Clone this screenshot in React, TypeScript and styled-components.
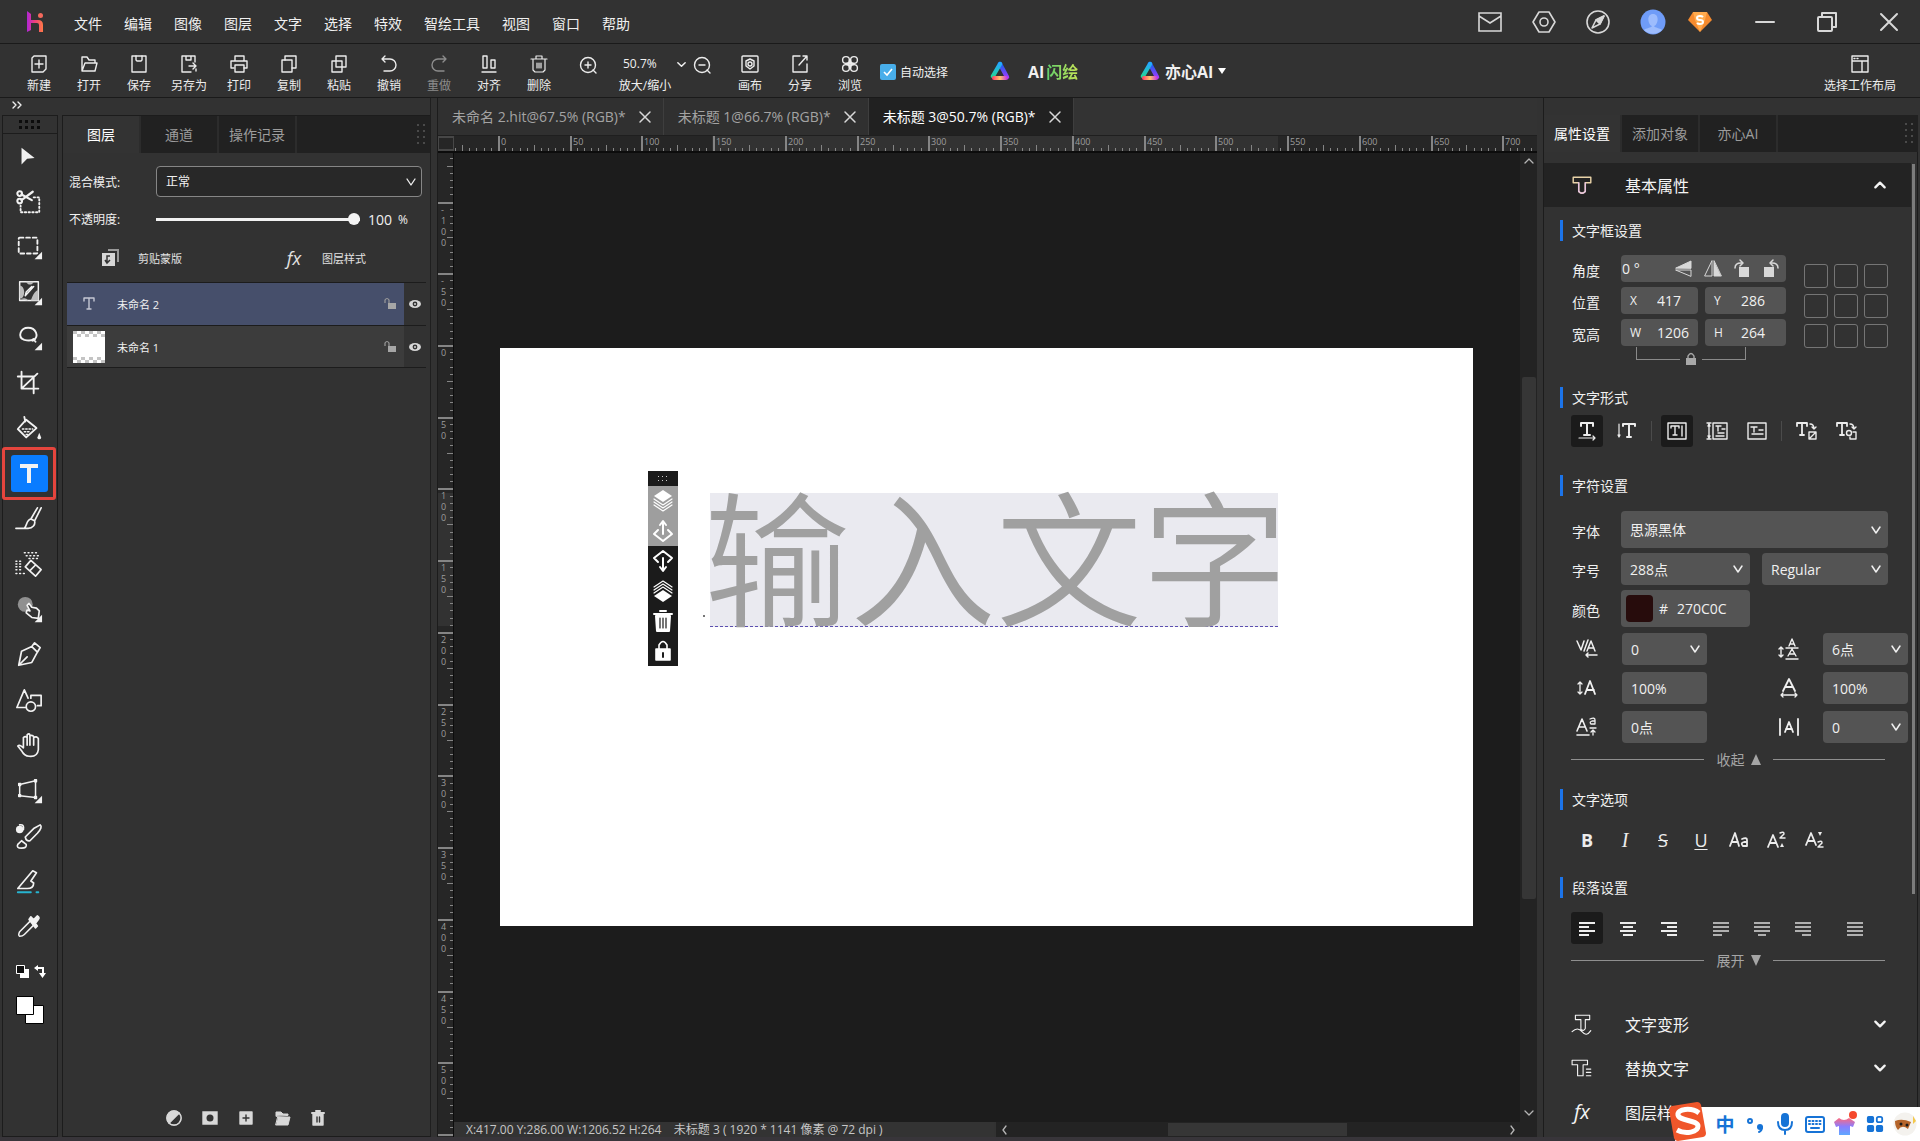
import React from "react";
import styled, { createGlobalStyle, css } from "styled-components";

const FONT = `"Open Sans", "Noto Sans CJK SC", sans-serif`;

const Global = createGlobalStyle`
  *, *::before, *::after { box-sizing: border-box; }
  body { margin: 0; background: #38353a; font-family: ${FONT}; font-size: 14px; color: #f0f0f0; overflow: hidden; }
  button, input, select { font: inherit; color: inherit; }
  button { margin: 0; padding: 0; border: 0; background: none; cursor: pointer; }
  svg { display: block; flex: none; }
`;

/* ---------- shell ---------- */

const Shell = styled.div`
  display: flex;
  flex-direction: column;
  height: 100vh;
  background: #323232;
`;

const TitleBar = styled.header`
  display: flex;
  align-items: center;
  flex: none;
  height: 44px;
  padding: 0 20px 0 24px;
  border-bottom: 1px solid #1a1a1a;
`;

const Logo = styled.div`
  width: 22px;
  margin-right: 28px;
`;

const Menu = styled.nav`
  display: flex;
  gap: 22px;
  flex: 1;
  padding-top: 4px;
`;

const MenuItem = styled.button`
  line-height: 20px;
  white-space: nowrap;
`;

const WindowActions = styled.div<{ $gap: number; $lead: number }>`
  display: flex;
  align-items: center;
  gap: ${(p) => p.$gap}px;
  margin-left: ${(p) => p.$lead}px;
`;

const IconButton = styled.button`
  display: flex;
  align-items: center;
  justify-content: center;
  color: #d8d8d8;
`;

const Toolbar = styled.div`
  display: flex;
  flex: none;
  height: 54px;
  padding: 0 18px 0 14px;
  border-bottom: 1px solid #1a1a1a;
  white-space: nowrap;
`;

const ToolbarButton = styled.button<{ $dim?: boolean; $wide?: boolean }>`
  display: flex;
  flex-direction: column;
  align-items: center;
  gap: 3px;
  width: ${(p) => (p.$wide ? 84 : 50)}px;
  padding-top: 10px;
  font-size: 12px;
  line-height: 18px;
  color: ${(p) => (p.$dim ? "#8c8c8c" : "#ececec")};
`;

const ZoomGroup = styled.div`
  display: flex;
  width: 161px;
  padding-left: 14px;
  gap: 5px;
`;

const ZoomIcon = styled(IconButton)`
  width: 20px;
  height: 20px;
  margin-top: 11px;
  color: #ececec;
`;

const ZoomValue = styled.label`
  display: flex;
  flex-direction: column;
  align-items: center;
  gap: 3px;
  width: 84px;
  padding-top: 10px;
  font-size: 12px;
  line-height: 18px;
`;

const ZoomSelect = styled.span`
  display: flex;
  align-items: center;
  align-self: stretch;
  height: 20px;
  padding-left: 20px;
`;

const PlainSelect = styled.select`
  flex: 1;
  min-width: 0;
  padding: 0;
  border: 0;
  background: transparent;
  appearance: none;
  outline: none;
`;

const AutoSelect = styled.label`
  display: flex;
  align-items: center;
  gap: 4px;
  width: 115px;
  padding: 2px 0 0 5px;
  font-size: 12px;
`;

const Tick = styled.span`
  position: relative;
  width: 16px;
  height: 16px;
`;

const TickInput = styled.input`
  width: 16px;
  height: 16px;
  margin: 0;
  display: block;
  appearance: none;
  border-radius: 2px;
  background: #48aeea;
`;

const TickMark = styled.svg`
  position: absolute;
  inset: 0;
  pointer-events: none;
`;

const BrandButton = styled.button<{ $width: number; $gap: number }>`
  display: flex;
  align-items: center;
  gap: ${(p) => p.$gap}px;
  width: ${(p) => p.$width}px;
  font-size: 16px;
  font-weight: 700;
`;

const GreenText = styled.span`
  background: linear-gradient(90deg, #5fcf6b, #c4e457);
  background-clip: text;
  color: transparent;
  margin-left: 2px;
`;

const Spacer = styled.div<{ $grow?: number }>`
  flex: ${(p) => p.$grow ?? 1};
`;

const Body = styled.div`
  display: grid;
  grid-template-columns: 431px minmax(0, 1fr) 377px;
  gap: 6px;
  flex: 1;
  min-height: 0;
  border-bottom: 4px solid #38353a;
`;

/* ---------- left side ---------- */

const LeftSide = styled.div`
  display: flex;
  flex-direction: column;
  min-height: 0;
  padding-left: 2px;
  border-right: 1px solid #1f1f1f;
`;

const CollapseStrip = styled.div`
  display: flex;
  align-items: center;
  flex: none;
  height: 17px;
  padding-left: 10px;
  padding-bottom: 4px;
`;

const LeftColumns = styled.div`
  display: flex;
  gap: 4px;
  flex: 1;
  min-height: 0;
`;

const ToolColumn = styled.div`
  display: flex;
  flex-direction: column;
  width: 56px;
  border: 1px solid #1c1c1c;
`;

const Grip = styled.div`
  display: flex;
  justify-content: center;
  align-items: center;
  flex: none;
  height: 18px;
  border-bottom: 1px solid #1c1c1c;
`;

const ToolList = styled.div`
  display: flex;
  flex-direction: column;
`;

const ToolButton = styled.button<{ $active?: boolean }>`
  display: flex;
  align-items: center;
  justify-content: center;
  width: 54px;
  height: 45px;
  padding-right: 2px;
  color: #f2f2f2;
  &:nth-child(3n) { margin-bottom: 1px; }
  ${(p) =>
    p.$active &&
    css`
      height: 53px;
      margin: -4px 0 -4px -1px;
      padding: 0;
      border: 3px solid #e5453d;
      border-radius: 3px;
    `}
`;

const ActiveTool = styled.span`
  display: flex;
  align-items: center;
  justify-content: center;
  width: 37px;
  height: 37px;
  border-radius: 3px;
  background: #0a7cff;
`;

const SwatchArea = styled.div`
  display: flex;
  flex-direction: column;
  gap: 17px;
  padding: 15px 0 0 13px;
`;

const Panel = styled.section`
  display: flex;
  flex-direction: column;
  flex: 1;
  min-width: 0;
  min-height: 0;
  border: 1px solid #1c1c1c;
  border-right: 0;
`;

const TabStrip = styled.div`
  display: flex;
  flex: none;
  height: 37px;
  background: #212121;
  align-items: stretch;
`;

const PanelTab = styled.button<{ $active?: boolean }>`
  width: 78px;
  padding-bottom: 2px;
  white-space: nowrap;
  border-right: 2px solid #2c2c2c;
  background: ${(p) => (p.$active ? "#333333" : "#212121")};
  color: ${(p) => (p.$active ? "#ffffff" : "#9c9c9c")};
`;

const TabGrip = styled.span`
  display: flex;
  align-items: center;
  padding-right: 2px;
`;

const FormRow = styled.div<{ $top: number; $height: number }>`
  display: flex;
  align-items: center;
  height: ${(p) => p.$height}px;
  margin: ${(p) => p.$top}px 8px 0 6px;
  font-size: 12px;
`;

const FormLabel = styled.label`
  width: 87px;
`;

const BlendSelect = styled.span`
  display: flex;
  align-items: center;
  flex: 1;
  height: 31px;
  padding: 0 4px 0 9px;
  border: 1px solid #868686;
  border-radius: 4px;
  background: #282828;
`;

const Slider = styled.input`
  width: 204px;
  height: 13px;
  margin: 0 8px 0 0;
  appearance: none;
  background: linear-gradient(#f2f2f2, #f2f2f2) center / 100% 3px no-repeat;
  &::-webkit-slider-thumb {
    appearance: none;
    width: 12px;
    height: 12px;
    border-radius: 50%;
    background: #f4f4f4;
  }
`;

const OpacityInput = styled.input`
  width: 30px;
  padding: 0;
  border: 0;
  background: transparent;
  font-size: 14px;
`;

const LayerActions = styled.div`
  display: grid;
  grid-template-columns: 184px 1fr;
  height: 34px;
  margin-top: 12px;
  padding-left: 36px;
`;

const LayerAction = styled.button`
  display: flex;
  align-items: center;
  gap: 17px;
  font-size: 11px;
  color: #e2e2e2;
`;

const Fx = styled.span<{ $size: number }>`
  width: 22px;
  font-size: ${(p) => p.$size}px;
  font-style: italic;
  line-height: 20px;
  text-align: center;
`;

const LayerList = styled.ul`
  flex: 1;
  margin: 7px 0 0;
  padding: 0 4px 0 4px;
  list-style: none;
`;

const LayerRow = styled.li`
  display: grid;
  grid-template-columns: minmax(0, 1fr) 22px;
  height: 43px;
  border-top: 1px solid #1c1c1c;
  &:last-child { border-bottom: 1px solid #1c1c1c; }
`;

const LayerBody = styled.div<{ $selected?: boolean }>`
  display: grid;
  grid-template-columns: 45px 1fr 16px;
  align-items: center;
  padding: 0 5px 0 5px;
  font-size: 11px;
  background: ${(p) => (p.$selected ? "#464f6b" : "#3c3c3c")};
`;

const Thumb = styled.span`
  display: flex;
  justify-content: center;
  width: 34px;
`;

const PanelFooter = styled.div`
  display: flex;
  gap: 16px;
  height: 36px;
  align-items: center;
  padding-left: 101px;
`;

/* ---------- work area ---------- */

const Work = styled.main`
  display: flex;
  flex-direction: column;
  min-width: 0;
  min-height: 0;
  border-left: 1px solid #1c1c1c;
`;

const DocTabs = styled.div`
  display: flex;
  flex: none;
  height: 38px;
  background: #333333;
  border-bottom: 1px solid #1f1f1f;
`;

const DocTab = styled.div<{ $active?: boolean }>`
  display: flex;
  align-items: center;
  gap: 12px;
  padding: 0 11px 0 14px;
  border-right: 1px solid #3e3e3e;
  background: ${(p) => (p.$active ? "#212121" : "#303030")};
  color: ${(p) => (p.$active ? "#ffffff" : "#a3a3a3")};
`;

const DocName = styled.button`
  white-space: nowrap;
  line-height: 20px;
`;

const RulerRow = styled.div`
  display: flex;
  flex: none;
  height: 17px;
  background: #262626;
  border-bottom: 2px solid #0c0c0c;
`;

const RulerCorner = styled.div`
  flex: none;
  width: 16px;
  border: 2px solid #474747;
  border-width: 2px 1px;
`;

const RulerTrack = styled.div`
  flex: 1;
  min-width: 0;
  overflow: hidden;
`;

const CanvasRow = styled.div`
  display: flex;
  flex: 1;
  min-height: 0;
`;

const SideRuler = styled.div`
  flex: none;
  width: 16px;
  overflow: hidden;
  background: #262626;
  border-right: 1px solid #0c0c0c;
`;

const CanvasColumn = styled.div`
  display: flex;
  flex-direction: column;
  flex: 1;
  min-width: 0;
`;

const Viewport = styled.div`
  display: flex;
  align-items: center;
  justify-content: center;
  flex: 1;
  min-height: 0;
  padding: 0 1px 1px 0;
  overflow: hidden;
  background: #1c1c1c;
`;

const Artboard = styled.div`
  position: relative;
  flex: none;
  width: 973px;
  height: 578px;
  background: #ffffff;
`;

const TextObject = styled.div`
  position: absolute;
  left: 210px;
  top: 145px;
  width: 568px;
  height: 134px;
  background: #eaeaf0;
  border-bottom: 1px dashed #5c4fb0;
`;

const CanvasText = styled.div`
  margin: -14px 0 0 -6px;
  font-family: "Noto Sans CJK SC", sans-serif;
  font-size: 146px;
  line-height: 146px;
  font-weight: 350;
  white-space: nowrap;
  color: #a0a0a0;
`;

const Anchor = styled.span`
  position: absolute;
  left: 203px;
  top: 267px;
  width: 2px;
  height: 2px;
  background: #777777;
`;

const FloatBar = styled.div`
  position: absolute;
  left: 148px;
  top: 123px;
  display: flex;
  flex-direction: column;
  width: 30px;
  background: #1b1b1b;
`;

const FloatGrip = styled.div`
  display: flex;
  align-items: center;
  justify-content: center;
  height: 15px;
`;

const FloatButton = styled.button<{ $muted?: boolean }>`
  display: flex;
  align-items: center;
  justify-content: center;
  height: 30px;
  color: #ffffff;
  background: ${(p) => (p.$muted ? "#9e9e9e" : "transparent")};
`;

const VScroll = styled.div`
  display: flex;
  flex-direction: column;
  align-items: center;
  width: 17px;
  padding: 2px 0 4px;
  background: #232323;
  color: #b5b5b5;
`;

const VThumb = styled.div`
  flex: 523;
  width: 14px;
  border-radius: 2px;
  background: #363636;
`;

const StatusRow = styled.div`
  display: flex;
  flex: none;
  height: 15px;
`;

const Status = styled.div`
  width: 540px;
  padding-left: 12px;
  font-size: 12px;
  line-height: 15px;
  white-space: pre;
  color: #c6c6c6;
  background: #333333;
`;

const HScroll = styled.div`
  display: flex;
  align-items: center;
  flex: 1;
  margin-left: 2px;
  padding: 0 2px;
  background: #232323;
  color: #b5b5b5;
`;

const HThumb = styled.div`
  flex: 179;
  height: 13px;
  background: #363636;
`;

/* ---------- properties ---------- */

const RightSide = styled.aside`
  display: flex;
  flex-direction: column;
  min-height: 0;
  overflow: hidden;
  padding: 17px 2px 0 0;
  border-left: 1px solid #1c1c1c;
`;

const Props = styled.div`
  position: relative;
  flex: 1;
  min-height: 0;
  padding-top: 11px;
  overflow: hidden;
  border-right: 1px solid #1c1c1c;
`;

const PropsThumb = styled.div`
  position: absolute;
  right: 2px;
  top: 12px;
  width: 3px;
  height: 730px;
  background: #7c7c7c;
`;

const Accordion = styled.button<{ $open?: boolean }>`
  display: grid;
  grid-template-columns: 24px 1fr 14px;
  column-gap: 30px;
  align-items: center;
  width: calc(100% - 6px);
  height: 44px;
  padding: 0 24px 0 27px;
  font-size: 16px;
  text-align: left;
  color: #f4f4f4;
  background: ${(p) => (p.$open ? "#232323" : "transparent")};
`;

const Heading = styled.h3<{ $top: number }>`
  height: 21px;
  margin: ${(p) => p.$top}px 0 0 16px;
  padding-left: 9px;
  border-left: 3px solid #1c74ea;
  font-size: 14px;
  font-weight: 400;
  line-height: 22px;
`;

const Transform = styled.div`
  display: flex;
  gap: 18px;
  margin: 14px 0 0 28px;
`;

const Rows = styled.div<{ $gap: number }>`
  display: flex;
  flex-direction: column;
  gap: ${(p) => p.$gap}px;
`;

const Row = styled.div<{ $gap: number }>`
  display: flex;
  gap: ${(p) => p.$gap}px;
`;

const RowLabel = styled.span`
  display: flex;
  align-items: center;
  width: 49px;
  padding-top: 2px;
`;

const Box = styled.label<{ $w: number; $h: number }>`
  display: flex;
  align-items: center;
  width: ${(p) => p.$w}px;
  height: ${(p) => p.$h}px;
  padding: 0 6px 0 9px;
  border-radius: 4px;
  background: #545454;
`;

const AngleBox = styled.div`
  display: flex;
  align-items: center;
  gap: 9px;
  width: 165px;
  height: 27px;
  padding: 0 5px 0 1px;
  border-radius: 4px;
  background: #545454;
`;

const Letter = styled.span`
  width: 27px;
  font-size: 12px;
`;

const PlainInput = styled.input`
  flex: 1;
  min-width: 0;
  width: 0;
  padding: 0;
  border: 0;
  outline: none;
  background: transparent;
`;

const Anchors = styled.div`
  display: grid;
  grid-template-columns: repeat(3, 24px);
  grid-auto-rows: 24px;
  gap: 6px;
  margin-top: 9px;
`;

const AnchorCell = styled.button`
  border: 1px solid #757575;
  border-radius: 3px;
`;

const LinkSize = styled.div`
  display: flex;
  align-items: flex-end;
  width: 110px;
  height: 20px;
  margin: -2px 0 0 92px;
  color: #a8a8a8;
`;

const LinkArm = styled.span<{ $side: "left" | "right" }>`
  flex: 1;
  height: 13px;
  margin-bottom: 6px;
  border-bottom: 1px solid #8a8a8a;
  border-${(p) => p.$side}: 1px solid #8a8a8a;
`;

const IconRow = styled.div<{ $top: number; $gap: number }>`
  display: flex;
  align-items: center;
  gap: ${(p) => p.$gap}px;
  margin: ${(p) => p.$top}px 0 0 27px;
`;

const SquareButton = styled.button<{ $active?: boolean; $dim?: boolean }>`
  display: flex;
  align-items: center;
  justify-content: center;
  width: 32px;
  height: 32px;
  border-radius: 3px;
  background: ${(p) => (p.$active ? "#1b1b1b" : "transparent")};
  color: ${(p) => (p.$dim ? "#b0b0b0" : "#ececec")};
`;

const Rule = styled.span<{ $clear?: boolean }>`
  width: 2px;
  height: 20px;
  border-left: 1px solid ${(p) => (p.$clear ? "transparent" : "#4b4b4b")};
`;

const CharRows = styled.div`
  display: flex;
  flex-direction: column;
  gap: 5px;
  margin: 15px 0 6px 28px;
`;

const Swatch = styled.span`
  width: 27px;
  height: 27px;
  margin-right: 6px;
  border-radius: 4px;
  background: #270c0c;
`;

const Hash = styled.span`
  width: 18px;
`;

const ColorBox = styled(Box)`
  padding-left: 5px;
`;

const MetricGrid = styled.div`
  display: grid;
  grid-template-columns: 51px 151px 50px 85px;
  row-gap: 7px;
  margin: 0 0 0 27px;
`;

const MetricIcon = styled.span`
  display: flex;
  align-items: center;
  width: 32px;
  justify-content: center;
`;

const Fold = styled.button<{ $top: number }>`
  display: flex;
  align-items: center;
  gap: 12px;
  width: 314px;
  height: 20px;
  margin: ${(p) => p.$top}px 0 0 27px;
  color: #a5a5a5;
`;

const FoldLine = styled.span<{ $grow: number }>`
  flex: ${(p) => p.$grow};
  height: 1px;
  background: #8f8f8f;
`;

const FoldArrow = styled.svg`
  margin-left: -5px;
`;

const AccordionList = styled.div`
  margin-top: 32px;
`;

const Glyph = styled.span<{ $kind?: string }>`
  font-size: 18px;
  line-height: 22px;
  ${(p) => p.$kind === "bold" && "font-weight: 700;"}
  ${(p) => p.$kind === "italic" && 'font-style: italic; font-family: "Liberation Serif", serif; font-size: 20px;'}
  ${(p) => p.$kind === "strike" && "text-decoration: line-through;"}
  ${(p) => p.$kind === "under" && "text-decoration: underline; text-underline-offset: 2px;"}
`;

/* ---------- input method bar ---------- */

const Ime = styled.div`
  position: fixed;
  right: 0;
  bottom: 0;
  display: flex;
  align-items: center;
  gap: 6px;
  height: 34px;
  padding-right: 3px;
  background: #ffffff;
  color: #1673d6;
`;

const ImeButton = styled.button`
  display: flex;
  align-items: center;
  justify-content: center;
  width: 24px;
  height: 30px;
  color: #1673d6;
  font-size: 19px;
  font-weight: 700;
`;

const ImeLogo = styled.div`
  width: 38px;
  margin: -7px 0 0 -6px;
`;

/* ---------- icons ---------- */

type IcoProps = { s?: number; vb?: number; w?: number; children: React.ReactNode };
const Ico = ({ s = 20, vb = 20, w = 1.4, children }: IcoProps) => (
  <svg width={s} height={s} viewBox={`0 0 ${vb} ${vb}`} fill="none" stroke="currentColor" strokeWidth={w} strokeLinecap="round" strokeLinejoin="round" aria-hidden="true">
    {children}
  </svg>
);

const Chevron = ({ dir = "down", s = 12, w = 1.6 }: { dir?: string; s?: number; w?: number }) => {
  const d: Record<string, string> = {
    down: "M2 4l4 4 4-4",
    deep: "M2 3l4 6 4-6",
    up: "M2 8l4-4 4 4",
    left: "M8 2L5 6l3 4",
    right: "M5 2l3 4-3 4",
  };
  return <Ico s={s} vb={12} w={w}><path d={d[dir]} /></Ico>;
};

const Dots = ({ cols, rows, step, size, color }: { cols: number; rows: number; step: number; size: number; color: string }) => (
  <svg width={cols * step} height={rows * step} aria-hidden="true">
    {Array.from({ length: cols * rows }, (_, i) => (
      <rect key={i} x={(i % cols) * step + 1} y={Math.floor(i / cols) * step + 1} width={size} height={size} fill={color} />
    ))}
  </svg>
);

const MoreMark = () => <path d="M29 20v8h-8z" fill="currentColor" stroke="none" />;

const toolbarItems: { label: string; dim?: boolean; icon: React.ReactNode }[] = [
  { label: "新建", icon: <><path d="M5 2h12v13l-3 3H3V4z" /><path d="M10 6v8M6 10h8" /></> },
  { label: "打开", icon: <path d="M3 17V3h5l2 3h6v3M3 17l3-8h12l-2 8z" /> },
  { label: "保存", icon: <><path d="M3 2h14v16H3z" /><path d="M7 2v4l1 1h4l1-1V2" /></> },
  { label: "另存为", icon: <><path d="M16 8V2H3v16h9M7 2v4h5V2" /><path d="M10 12h7M14 9l3 3-3 3M17 15v2" /></> },
  { label: "打印", icon: <><path d="M6 7V2h9v5M5 14H2V7h16v7h-3" /><path d="M6 11h9v7H6z" /></> },
  { label: "复制", icon: <><path d="M3 6h10v12H3z" /><path d="M6 6V2h11v12h-4" /></> },
  { label: "粘贴", icon: <><path d="M7 2h10v11H7z" /><path d="M3 7h10v11H3z" /></> },
  { label: "撤销", icon: <path d="M6 2L3 5l3 3M3 5h8a6 6 0 010 12H5" /> },
  { label: "重做", dim: true, icon: <path d="M14 2l3 3-3 3M17 5H9a6 6 0 000 12h6" /> },
  { label: "对齐", icon: <><path d="M4 2h4v12H4zM12 6h4v8h-4zM3 18h14" /></> },
  { label: "删除", icon: <><path d="M2 5h16M7 5V2h6v3M4 5v11l2 2h8l2-2V5M8 9v5M10 9v5M12 9v5" strokeWidth="1.2" /></> },
];

const toolbarTail: { label: string; icon: React.ReactNode }[] = [
  { label: "画布", icon: <><rect x="2" y="2" width="16" height="16" rx="1" /><path d="M10 5l4 2v5l-4 3-4-3V7z" /><circle cx="10" cy="10" r="2" /></> },
  { label: "分享", icon: <><path d="M10 2H3v16h14v-8M9 11l8-9M13 2h4v4" /></> },
  { label: "浏览", icon: <><circle cx="6" cy="6" r="3.4" /><circle cx="14" cy="6" r="3.4" /><circle cx="6" cy="14" r="3.4" /><circle cx="14" cy="14" r="3.4" /><path d="M6 9.400h3.400V6M10.600 6v3.400H14M6 10.600h3.400V14M10.600 14v-3.400H14" /></> },
];

const tools: { name: string; icon: React.ReactNode; active?: boolean }[] = [
  { name: "移动", icon: <path d="M7 5l14 11-8 1-6 6z" fill="currentColor" stroke="none" /> },
  { name: "抠图", icon: <><circle cx="5" cy="6" r="2.500" strokeWidth="2.200" /><circle cx="5" cy="14" r="2.500" strokeWidth="2.200" /><path d="M7 7l11 6M7 13L19 4" strokeWidth="2.400" /><path d="M20 10h6v16H6v-7" strokeDasharray="1.500 2.500" strokeWidth="2" /></> },
  { name: "选框", icon: <><rect x="4" y="5" width="20" height="17" rx="1" strokeDasharray="4 3" strokeWidth="2" /><MoreMark /></> },
  { name: "取样", icon: <><rect x="5" y="3" width="20" height="20" /><path d="M5 7c5 0 7 10 2 14l-2-1zM12 3c1 4 7 4 8 0zM25 12c-4 0-7 8-8 11h8zM6 22c3-2 6-2 8 1z" fill="#bdbdbd" stroke="none" /><path d="M11 18l9-10M11 18l1-4 6-6" /><MoreMark /></> },
  { name: "套索", icon: <><path d="M19 18c8-5 3-14-5-14S2 14 10 17c4 1 8 1 10-1l2 3" strokeWidth="2" /><MoreMark /></> },
  { name: "裁剪", icon: <path d="M7 3v18h18M3 8h17v18M7 21L24 5" strokeWidth="2" /> },
  { name: "油漆桶", icon: <><path d="M10 2l1 5M12 5L3 15l9 9 11-10z" strokeWidth="2" /><path d="M8 15h11M10 18h7M12 21h3" strokeDasharray="1.500 2" /><path d="M26 19l2 5a2 2 0 01-4 0z" fill="currentColor" stroke="none" /></> },
  { name: "文字", active: true, icon: null },
  { name: "画笔", icon: <path d="M1 25h13c5 0 8-4 7-8l-4-2c-5 1-4 7-7 10M17 15l7-12M21 17l7-14" strokeWidth="1.800" /> },
  { name: "橡皮擦", icon: <><path d="M17 10l-6 7 11 10 6-7zM22 15l-6 6" strokeWidth="1.800" /><path d="M10 2h16M12 5h14M15 8h11M1 11h5M1 14h7M1 17h8M1 20h8M1 24h12" strokeDasharray="1 3" /></> },
  { name: "涂抹", icon: <><circle cx="11" cy="9" r="8" fill="#909090" stroke="none" /><path d="M13 10l3 6-3-1-1 3 6 5 7 1 1-8-3-3-5-1-3-4z" fill="#333" strokeWidth="1.800" /><MoreMark /></> },
  { name: "钢笔", icon: <path d="M4 26l3-15 11-5 6 6-6 11zM4 26l9-9M18 6l3-4 6 5-3 5" strokeWidth="1.800" /> },
  { name: "形状", icon: <><path d="M11 22H2L10 3l4 9M17 12V9h11v11h-4" strokeWidth="1.800" /><circle cx="17" cy="21" r="5" strokeWidth="1.800" /></> },
  { name: "抓手", icon: <path d="M9 17V6q2-2 4 0V3q2-2 3 0v1q3-1 4 1v1q3-2 5 1v12q-1 8-10 7-5 0-8-6l-4-5q2-2 6 2M13 6v8M16 4v10M20 5v9" strokeWidth="1.800" /> },
  { name: "变换", icon: <><path d="M5 8l17-4v18L5 20z" /><path d="M4 7h2v2H4zM21 3h2v2h-2zM21 21h2v2h-2zM4 19h2v2H4z" fill="currentColor" /><MoreMark /></> },
  { name: "混合画笔", icon: <><circle cx="5" cy="7" r="4" fill="currentColor" stroke="none" /><path d="M5 2q5-1 4 5M27 2q3 2-3 9l-8 8q-4 1-5-4L20 6zM7 19l5 4q1 4-5 4T3 23z" strokeWidth="1.800" /></> },
  { name: "切片", icon: <><path d="M3 22L19 3l4 2-6 9 3 2q0 6-7 6z" strokeWidth="1.800" /><path d="M3 26h14M23 26h2" stroke="#27b4d0" strokeWidth="2" /></> },
  { name: "吸管", icon: <><path d="M16 9L5 20q-2 4 0 5 3 0 5-2l10-10" strokeWidth="1.600" /><path d="M15 7l2-3 3 3 4-4q3 2 1 4l-3 4 2 3-2 2z" fill="currentColor" /></> },
];

const AlignIcon = ({ rows }: { rows: [number, number][] }) => (
  <Ico s={20} w={2}>{rows.map(([a, b], i) => <path key={i} strokeLinecap="butt" d={`M${a} ${5 + i * 4}H${b}`} />)}</Ico>
);

const BrandMark = () => (
  <svg width="20" height="20" viewBox="0 0 20 20" fill="none" strokeWidth="4.400" strokeLinecap="round" strokeLinejoin="round" aria-hidden="true">
    <defs>
      <linearGradient id="bl" x1="0" y1="0" x2="0" y2="1"><stop stopColor="#24a9ff" /><stop offset="1" stopColor="#22d39a" /></linearGradient>
      <linearGradient id="br" x1="0" y1="0" x2="0" y2="1"><stop stopColor="#1760e8" /><stop offset="1" stopColor="#9a3bff" /></linearGradient>
      <linearGradient id="bb" x1="3" y1="0" x2="17" y2="0" gradientUnits="userSpaceOnUse"><stop stopColor="#ff4667" /><stop offset=".5" stopColor="#ffc46a" /><stop offset="1" stopColor="#c936e0" /></linearGradient>
    </defs>
    <path d="M10 3l7 13" stroke="url(#br)" />
    <path d="M10 3L3 15" stroke="url(#bl)" />
    <path d="M4 17h12" stroke="url(#bb)" strokeWidth="4" />
  </svg>
);

/* ---------- rulers ---------- */

const STEP = 1.4348;
const RulerX = () => (
  <svg width="100%" height="15" aria-hidden="true">
    <rect x="258" width="566" height="15" fill="#323232" />
    {Array.from({ length: 152 }, (_, i) => {
      const v = -30 + i * 5;
      const x = Math.round(44 + v * STEP);
      const len = v % 50 === 0 ? 15 : v % 25 === 0 ? 6 : 3;
      return <rect key={v} x={x} y={15 - len} width={v % 50 === 0 ? 2 : 1} height={len} fill="#858585" />;
    })}
    {Array.from({ length: 15 }, (_, i) => (
      <text key={i} x={Math.round(44 + i * 50 * STEP) + 3} y="9" fontSize="9" fill="#9d9d9d">{i * 50}</text>
    ))}
  </svg>
);

const RulerY = () => (
  <svg width="15" height="985" aria-hidden="true">
    <rect y="340" width="15" height="133" fill="#323232" />
    {Array.from({ length: 138 }, (_, i) => {
      const v = -135 + i * 5;
      const y = Math.round(192 + v * STEP);
      const len = v % 50 === 0 ? 15 : v % 25 === 0 ? 6 : 3;
      return <rect key={v} x={15 - len} y={y} width={len} height={v % 50 === 0 ? 2 : 1} fill="#858585" />;
    })}
    {Array.from({ length: 13 }, (_, i) => {
      const v = -100 + i * 50;
      return String(v).split("").map((c, j) => (
        <text key={`${v}-${j}`} x="3" y={Math.round(192 + v * STEP) + 11 + j * 11} fontSize="9" fill="#9d9d9d">{c}</text>
      ));
    })}
  </svg>
);

/* ---------- small parts ---------- */

const SelectBox = ({ w, h, value, label }: { w: number; h: number; value: string; label: string }) => (
  <Box $w={w} $h={h}>
    <PlainSelect aria-label={label} defaultValue={value}><option>{value}</option></PlainSelect>
    <Chevron dir="deep" s={12} w={1.5} />
  </Box>
);

const InputBox = ({ w, h, value, label, letter }: { w: number; h: number; value: string; label: string; letter?: string }) => (
  <Box $w={w} $h={h}>
    {letter && <Letter>{letter}</Letter>}
    <PlainInput aria-label={label} defaultValue={value} />
  </Box>
);

const LockOpen = () => (
  <svg width="14" height="14" viewBox="0 0 14 14" fill="none" stroke="#9a9a9a" aria-hidden="true">
    <path d="M2 6V3q2-3 4 0v3" strokeWidth="1.200" /><path d="M5 6h8v6H5z" fill="#a6a6a6" stroke="none" />
  </svg>
);

const Eye = () => (
  <svg width="12" height="12" viewBox="0 0 12 12" aria-hidden="true">
    <ellipse cx="6" cy="6" rx="6" ry="4" fill="#d6d6d6" /><circle cx="6" cy="6" r="2.400" fill="#333" /><circle cx="6" cy="6" r="1" fill="#d6d6d6" />
  </svg>
);

export default function App() {
  return (
    <>
      <Global />
      <Shell>
        <TitleBar>
          <Logo>
            <svg width="22" height="24" viewBox="0 0 22 24" fill="none" aria-label="Logo">
              <defs>
                <linearGradient id="lg" x1="0" y1="0" x2="1" y2="0"><stop stopColor="#b026d6" /><stop offset=".5" stopColor="#f0407a" /><stop offset="1" stopColor="#ff7a45" /></linearGradient>
              </defs>
              <path d="M3 1l4 3v6h7q5 0 5 5v7h-4v-7q0-2-2-2H7v7l-4 2z" fill="url(#lg)" />
              <circle cx="16.500" cy="5.500" r="2.500" fill="#f4695c" />
            </svg>
          </Logo>
          <Menu>
            {["文件", "编辑", "图像", "图层", "文字", "选择", "特效", "智绘工具", "视图", "窗口", "帮助"].map((m) => (
              <MenuItem key={m}>{m}</MenuItem>
            ))}
          </Menu>
          <WindowActions $gap={30} $lead={22}>
            <IconButton aria-label="消息"><Ico s={24} vb={24} w={1.6}><path d="M1 3h22v18H1zM1 6l11 7 11-7" strokeLinejoin="miter" /></Ico></IconButton>
            <IconButton aria-label="设置"><Ico s={24} vb={24} w={1.6}><path d="M7 2h10l6 10-6 10H7L1 12z" /><circle cx="12" cy="12" r="4" /></Ico></IconButton>
            <IconButton aria-label="发现"><Ico s={24} vb={24} w={1.6}><circle cx="12" cy="12" r="11" /><path d="M18 6l-4 8-8 4 4-8z" /><path d="M18 6l-4 8-4-4z" fill="currentColor" /></Ico></IconButton>
            <IconButton aria-label="账号">
              <svg width="26" height="26" viewBox="0 0 26 26" aria-hidden="true"><circle cx="13" cy="13" r="12.500" fill="#6f9cf8" /><path d="M13 5c7 0 5 11 1 12 1 2 6 2 8 4a12.500 12.500 0 01-18 0c2-2 7-2 8-4-4-1-6-12 1-12z" fill="#9dbcfd" /></svg>
            </IconButton>
          </WindowActions>
          <WindowActions $gap={30} $lead={22}>
            <IconButton aria-label="会员">
              <svg width="24" height="24" viewBox="0 0 24 24" aria-hidden="true"><path d="M5 2h14l5 8-12 12L0 10z" fill="#f58a2e" /><path d="M5 2h14l-2 8-5 12-5-12z" fill="#ffab4f" /><path d="M15 7q-1-1-3-1-3 0-3 2t3 2q3 0 3 2t-3 2q-2 0-3-1" fill="none" stroke="#fff" strokeWidth="2" /></svg>
            </IconButton>
          </WindowActions>
          <WindowActions $gap={40} $lead={42}>
            <IconButton aria-label="最小化"><Ico s={22} vb={22} w={2}><path d="M2 11h18" /></Ico></IconButton>
            <IconButton aria-label="还原"><Ico s={22} vb={22} w={2}><rect x="2" y="6" width="14" height="14" rx="1" /><path d="M6 6V2h14v14h-4" /></Ico></IconButton>
            <IconButton aria-label="关闭"><Ico s={22} vb={22} w={2}><path d="M3 3l16 16M19 3L3 19" /></Ico></IconButton>
          </WindowActions>
        </TitleBar>

        <Toolbar>
          {toolbarItems.map((t) => (
            <ToolbarButton key={t.label} $dim={t.dim}><Ico>{t.icon}</Ico>{t.label}</ToolbarButton>
          ))}
          <ZoomGroup>
            <ZoomIcon aria-label="放大"><Ico><circle cx="10" cy="10" r="7.500" /><path d="M10 7v6M7 10h6M15 15l3 3" /></Ico></ZoomIcon>
            <ZoomValue>
              <ZoomSelect>
                <PlainSelect defaultValue="50.7%"><option>50.7%</option></PlainSelect>
                <Chevron s={11} />
              </ZoomSelect>
              放大/缩小
            </ZoomValue>
            <ZoomIcon aria-label="缩小"><Ico><circle cx="10" cy="10" r="7.500" /><path d="M7 10h6M15 15l3 3" /></Ico></ZoomIcon>
          </ZoomGroup>
          {toolbarTail.map((t) => (
            <ToolbarButton key={t.label}><Ico>{t.icon}</Ico>{t.label}</ToolbarButton>
          ))}
          <AutoSelect>
            <Tick>
              <TickInput type="checkbox" defaultChecked />
              <TickMark width="16" height="16" viewBox="0 0 16 16" fill="none" stroke="#fff" strokeWidth="1.600"><path d="M4 8l3 3 5-6" /></TickMark>
            </Tick>
            自动选择
          </AutoSelect>
          <BrandButton $width={150} $gap={18}><BrandMark /><span>AI<GreenText>闪绘</GreenText></span></BrandButton>
          <BrandButton $width={90} $gap={5}>
            <BrandMark />亦心AI
            <svg width="8" height="6" viewBox="0 0 8 6" aria-hidden="true"><path d="M0 0h8L4 6z" fill="#fff" /></svg>
          </BrandButton>
          <Spacer />
          <ToolbarButton $wide>
            <Ico><path d="M2 2h16v16H2zM2 7h16M12 7v11" /><path d="M4 4.500h5" strokeDasharray="1 2" /></Ico>选择工作布局
          </ToolbarButton>
        </Toolbar>

        <Body>
          <LeftSide>
            <CollapseStrip><Ico s={12} vb={12} w={1.4}><path d="M1 3l3 3-3 3M6 3l3 3-3 3" /></Ico></CollapseStrip>
            <LeftColumns>
              <ToolColumn>
                <Grip><Dots cols={4} rows={2} step={6} size={3} color="#0c0c0c" /></Grip>
                <ToolList>
                  {tools.map((t) =>
                    t.active ? (
                      <ToolButton key={t.name} aria-label={t.name} $active>
                        <ActiveTool><Ico s={24} vb={24} w={4}><path d="M3 4h18M12 4v17" strokeLinecap="butt" /></Ico></ActiveTool>
                      </ToolButton>
                    ) : (
                      <ToolButton key={t.name} aria-label={t.name}><Ico s={28} vb={30} w={1.6}>{t.icon}</Ico></ToolButton>
                    )
                  )}
                </ToolList>
                <SwatchArea>
                  <svg width="32" height="14" viewBox="0 0 32 14" aria-hidden="true">
                    <path d="M4 4h9v9H4z" fill="#fff" /><path d="M.5.5h8v8h-8z" fill="#111" stroke="#fff" />
                    <path d="M20 3h7v6" fill="none" stroke="#fff" strokeWidth="2" /><path d="M22 0v6l-4-3zM23 8h7l-3.500 5z" fill="#fff" />
                  </svg>
                  <svg width="28" height="28" viewBox="0 0 28 28" stroke="#000" fill="#fff" aria-hidden="true"><path d="M9.500 9.500h18v18h-18z" /><path d="M.5.5h17v18H.5z" /></svg>
                </SwatchArea>
              </ToolColumn>

              <Panel>
                <TabStrip>
                  <PanelTab $active>图层</PanelTab>
                  <PanelTab>通道</PanelTab>
                  <PanelTab>操作记录</PanelTab>
                  <Spacer />
                  <TabGrip><Dots cols={2} rows={4} step={6} size={2} color="#4a4a4a" /></TabGrip>
                </TabStrip>
                <FormRow $top={13} $height={31}>
                  <FormLabel htmlFor="blend">混合模式:</FormLabel>
                  <BlendSelect>
                    <PlainSelect id="blend" defaultValue="正常"><option>正常</option></PlainSelect>
                    <Chevron dir="deep" s={12} w={1.3} />
                  </BlendSelect>
                </FormRow>
                <FormRow $top={12} $height={20}>
                  <FormLabel htmlFor="opacity">不透明度:</FormLabel>
                  <Slider id="opacity" type="range" defaultValue={100} />
                  <OpacityInput aria-label="不透明度数值" defaultValue="100" />%
                </FormRow>
                <LayerActions>
                  <LayerAction>
                    <svg width="22" height="18" viewBox="0 0 22 18" aria-hidden="true"><path d="M9 1h10v12" fill="none" stroke="#999" strokeWidth="2" /><path d="M3 4h13v13H3z" fill="#d6d6d6" /><path d="M11 7H8v7M6 11l2 3 3-3" fill="none" stroke="#333" strokeWidth="1.500" /></svg>
                    剪贴蒙版
                  </LayerAction>
                  <LayerAction><Fx $size={18}>fx</Fx>图层样式</LayerAction>
                </LayerActions>
                <LayerList>
                  <LayerRow>
                    <LayerBody $selected>
                      <Thumb><Ico s={18} vb={18} w={1.4}><path d="M4 6V3h10v3M9 3v11M7 14h4" stroke="#c5c8d4" /></Ico></Thumb>
                      未命名 2<LockOpen />
                    </LayerBody>
                    <IconButton aria-label="显示 未命名 2"><Eye /></IconButton>
                  </LayerRow>
                  <LayerRow>
                    <LayerBody>
                      <Thumb>
                        <svg width="32" height="32" viewBox="0 0 32 32" aria-hidden="true">
                          <path d="M0 0h32v32H0z" fill="#fff" />
                          {Array.from({ length: 8 }, (_, i) => (
                            <g key={i} fill="#c4c4c4">
                              <path d={`M${i * 4} ${i % 2 ? 3 : 0}h4v3h-4z`} /><path d={`M${i * 4} ${i % 2 ? 29 : 26}h4v3h-4z`} />
                            </g>
                          ))}
                        </svg>
                      </Thumb>
                      未命名 1<LockOpen />
                    </LayerBody>
                    <IconButton aria-label="显示 未命名 1"><Eye /></IconButton>
                  </LayerRow>
                </LayerList>
                <PanelFooter>
                  <IconButton aria-label="调整图层"><Ico vb={20}><circle cx="10" cy="10" r="7" /><path d="M5 15A7 7 0 0015 5z" fill="#323232" /><path d="M5 15A7 7 0 015 5a7 7 0 0110 0z" fill="currentColor" /></Ico></IconButton>
                  <IconButton aria-label="蒙版"><Ico vb={20}><path d="M3 4h14v12H3z" fill="currentColor" strokeLinejoin="miter" /><circle cx="10" cy="10" r="3.500" fill="#333" stroke="none" /></Ico></IconButton>
                  <IconButton aria-label="新建图层"><Ico vb={20}><path d="M4 4h12v12H4z" fill="currentColor" /><path d="M10 7v6M7 10h6" stroke="#333" /></Ico></IconButton>
                  <IconButton aria-label="新建组"><Ico vb={20} w={1}><path d="M4 8V4h5l2 2h5v1z" fill="currentColor" /><path d="M6 9h12l-2 8H4z" fill="currentColor" /></Ico></IconButton>
                  <IconButton aria-label="删除图层"><Ico vb={20}><path d="M5 6h10v11H5z" fill="currentColor" /><path d="M4 5h12M8 3h4" strokeWidth="2" /><path d="M9 9v5M11.500 9v5" stroke="#333" /></Ico></IconButton>
                </PanelFooter>
              </Panel>
            </LeftColumns>
          </LeftSide>

          <Work>
            <DocTabs>
              {["未命名 2.hit@67.5% (RGB)*", "未标题 1@66.7% (RGB)*", "未标题 3@50.7% (RGB)*"].map((n, i) => (
                <DocTab key={n} $active={i === 2}>
                  <DocName>{n}</DocName>
                  <IconButton aria-label={`关闭 ${n}`}><Ico s={14} vb={14} w={1.5}><path d="M2 2l10 10M12 2L2 12" /></Ico></IconButton>
                </DocTab>
              ))}
            </DocTabs>
            <RulerRow><RulerCorner /><RulerTrack><RulerX /></RulerTrack></RulerRow>
            <CanvasRow>
              <SideRuler><RulerY /></SideRuler>
              <CanvasColumn>
                <CanvasRow>
                  <Viewport>
                    <Artboard>
                      <FloatBar>
                        <FloatGrip><Dots cols={3} rows={2} step={4} size={1} color="#cccccc" /></FloatGrip>
                        <FloatButton $muted aria-label="置顶"><Ico s={24} vb={24} w={1.2}><path d="M12 1l9 6-9 6-9-6z" fill="currentColor" stroke="none" /><path d="M3 10l9 6 9-6M3 13l9 6 9-6M3 16l9 6 9-6" /></Ico></FloatButton>
                        <FloatButton $muted aria-label="上移一层"><Ico s={24} vb={24} w={2}><path d="M7 11l-4 4 9 7 9-7-4-4M12 15V4M9 6l3-4 3 4" /></Ico></FloatButton>
                        <FloatButton aria-label="下移一层"><Ico s={24} vb={24} w={2}><path d="M7 13L3 9l9-7 9 7-4 4M12 9v12M9 18l3 4 3-4" /></Ico></FloatButton>
                        <FloatButton aria-label="置底"><Ico s={24} vb={24} w={1.2}><path d="M12 11l9 6-9 6-9-6z" fill="currentColor" stroke="none" /><path d="M3 14l9-6 9 6M3 11l9-6 9 6M3 8l9-6 9 6" /></Ico></FloatButton>
                        <FloatButton aria-label="删除"><Ico s={24} vb={24} w={2}><path d="M3 5h18M9 2h6" /><path d="M5 7h14l-1 15H6z" fill="currentColor" /><path d="M9 9v10M12 9v10M15 9v10" stroke="#1b1b1b" strokeWidth="1.200" /></Ico></FloatButton>
                        <FloatButton aria-label="锁定"><Ico s={24} vb={24} w={1.6}><path d="M8 10V6q4-7 8 0v4" /><path d="M5 10h14v11H5z" fill="currentColor" /><path d="M12 14v4" stroke="#1b1b1b" strokeWidth="2" /></Ico></FloatButton>
                      </FloatBar>
                      <Anchor />
                      <TextObject><CanvasText>输入文字</CanvasText></TextObject>
                    </Artboard>
                  </Viewport>
                </CanvasRow>
                <StatusRow>
                  <Status>X:417.00 Y:286.00 W:1206.52 H:264    未标题 3 ( 1920 * 1141 像素 @ 72 dpi )</Status>
                  <HScroll>
                    <Chevron dir="left" w={1.3} /><Spacer $grow={157} /><HThumb /><Spacer $grow={158} /><Chevron dir="right" w={1.3} />
                  </HScroll>
                </StatusRow>
              </CanvasColumn>
              <VScroll>
                <Chevron dir="up" w={1.3} /><Spacer $grow={211} /><VThumb /><Spacer $grow={209} /><Chevron w={1.3} />
                <Spacer $grow={14} />
              </VScroll>
            </CanvasRow>
          </Work>

          <RightSide>
            <TabStrip>
              <PanelTab $active>属性设置</PanelTab>
              <PanelTab>添加对象</PanelTab>
              <PanelTab>亦心AI</PanelTab>
              <Spacer />
              <TabGrip><Dots cols={2} rows={4} step={6} size={2} color="#4a4a4a" /></TabGrip>
            </TabStrip>
            <Props>
              <Accordion $open>
                <Ico s={22} vb={20} w={1.3}><path d="M2 3h16v5h-5v8q-3 3-6 0V8H2z" stroke="#e9d3a8" /><path d="M7 8v8q3 3 6 0V8" stroke="#e7c3e0" /></Ico>
                基本属性
                <Chevron dir="up" s={14} w={2} />
              </Accordion>
              <Heading $top={13}>文字框设置</Heading>
              <Transform>
                <Rows $gap={5}>
                  <Row $gap={0}>
                    <RowLabel>角度</RowLabel>
                    <AngleBox>
                      <PlainInput aria-label="角度" defaultValue="0 °" />
                      <IconButton aria-label="垂直翻转"><Ico w={1}><path d="M2 9L17 2v7z" fill="currentColor" /><path d="M2 11h15v6z" /></Ico></IconButton>
                      <IconButton aria-label="水平翻转"><Ico w={1}><path d="M11 2v15h7z" fill="currentColor" /><path d="M9 2v15H2z" /></Ico></IconButton>
                      <IconButton aria-label="顺时针旋转"><Ico w={1.5}><path d="M7 8h10v10H7z" fill="currentColor" stroke="none" /><path d="M3 9q0-5 6-5M8 1l3 3-3 3" /></Ico></IconButton>
                      <IconButton aria-label="逆时针旋转"><Ico w={1.5}><path d="M3 8h10v10H3z" fill="currentColor" stroke="none" /><path d="M17 9q0-5-6-5M12 1L9 4l3 3" /></Ico></IconButton>
                    </AngleBox>
                  </Row>
                  <Row $gap={0}>
                    <RowLabel>位置</RowLabel>
                    <Row $gap={7}><InputBox w={77} h={27} letter="X" value="417" label="X" /><InputBox w={81} h={27} letter="Y" value="286" label="Y" /></Row>
                  </Row>
                  <Row $gap={0}>
                    <RowLabel>宽高</RowLabel>
                    <Row $gap={7}><InputBox w={77} h={27} letter="W" value="1206" label="W" /><InputBox w={81} h={27} letter="H" value="264" label="H" /></Row>
                  </Row>
                </Rows>
                <Anchors>
                  {Array.from({ length: 9 }, (_, i) => <AnchorCell key={i} aria-label={`锚点 ${i + 1}`} />)}
                </Anchors>
              </Transform>
              <LinkSize>
                <LinkArm $side="left" />
                <IconButton aria-label="锁定比例">
                  <svg width="22" height="14" viewBox="0 0 22 14" aria-hidden="true"><path d="M8 6V4q3-5 6 0v2" fill="none" stroke="#a8a8a8" strokeWidth="1.400" /><path d="M6 6h10v7H6z" fill="#a8a8a8" /></svg>
                </IconButton>
                <LinkArm $side="right" />
              </LinkSize>

              <Heading $top={21}>文字形式</Heading>
              <IconRow $top={7} $gap={8}>
                <SquareButton $active aria-label="横排"><Ico w={2} vb={20}><path d="M4 5V2h12v3M10 2v12M7 14h6" /><path d="M2 17h16M16 15l2 2-2 2" strokeWidth="1.200" /></Ico></SquareButton>
                <SquareButton aria-label="竖排"><Ico w={2} vb={20}><path d="M6 5V3h12v2M12 3v13M10 16h4" /><path d="M2 3v13M1 14l1 2 1-2" strokeWidth="1.200" /></Ico></SquareButton>
                <Rule />
                <SquareButton $active aria-label="点文字"><Ico w={1.4} vb={20}><path d="M1 2h18v16H1z" /><path d="M4 7V5h8v2M8 5v9M6 14h4M15 5v10" /></Ico></SquareButton>
                <SquareButton aria-label="段落文字"><Ico s={22} w={1.4} vb={22}><path d="M7 3h14v16H7z" /><path d="M10 6h5M12 6v5M12 13h6M16 9h3M10 16h8M3 5v12M1 3h4M1 19h4M2 6l1-2 1 2M2 16l1 2 1-2" /></Ico></SquareButton>
                <SquareButton aria-label="自适应"><Ico w={1.4} vb={20}><path d="M1 2h18v16H1z" /><path d="M4 6h6M7 6v5M12 9h4M5 13h11" /></Ico></SquareButton>
                <Rule />
                <SquareButton aria-label="转为位图"><Ico s={22} w={1.4} vb={22}><path d="M1 6V3h10v3M6 3v12M4 15h4" strokeWidth="1.800" /><path d="M13 12h7v7h-7zM14 18l5-5M14 4q4 0 4 5M16 7l2 2 2-2" /></Ico></SquareButton>
                <SquareButton aria-label="转为形状"><Ico s={22} w={1.4} vb={22}><path d="M1 6V3h10v3M6 3v12M4 15h4" strokeWidth="1.800" /><path d="M14 4q4 0 4 5M16 7l2 2 2-2" /><circle cx="13" cy="13" r="2.500" /><path d="M17 12h3v7h-6v-2" /></Ico></SquareButton>
              </IconRow>

              <Heading $top={28}>字符设置</Heading>
              <CharRows>
                <Row $gap={0}><RowLabel>字体</RowLabel><SelectBox w={267} h={37} value="思源黑体" label="字体" /></Row>
                <Row $gap={0}>
                  <RowLabel>字号</RowLabel>
                  <Row $gap={12}><SelectBox w={129} h={32} value="288点" label="字号" /><SelectBox w={126} h={32} value="Regular" label="字重" /></Row>
                </Row>
                <Row $gap={0}>
                  <RowLabel>颜色</RowLabel>
                  <ColorBox $w={129} $h={37}><Swatch /><Hash>#</Hash><PlainInput aria-label="颜色" defaultValue="270C0C" /></ColorBox>
                </Row>
              </CharRows>
              <MetricGrid>
                <MetricIcon><Ico s={22} vb={22} w={1.5}><path d="M1 3l4 9 3-9M12 2L8 13M11 13l4-10 4 10M13 10h5M10 17h11M12 15l-2 2 2 2" /></Ico></MetricIcon>
                <SelectBox w={85} h={32} value="0" label="字距" />
                <MetricIcon><Ico s={22} vb={22} w={1.4}><path d="M11 8l3-7 3 7M12 6h4M8 10h12M10 18l4-7 4 7M12 16h4M8 21h12M3 9v10M1 11l2-2 2 2M1 17l2 2 2-2" /></Ico></MetricIcon>
                <SelectBox w={85} h={32} value="6点" label="行距" />
                <MetricIcon><Ico s={20} w={1.8}><path d="M8 16l5-13 5 13M10 12h7" /><path d="M3 4v12M1 6l2-2 2 2M1 14l2 2 2-2" strokeWidth="1.300" /></Ico></MetricIcon>
                <InputBox w={85} h={32} value="100%" label="垂直缩放" />
                <MetricIcon><Ico s={20} w={1.8}><path d="M4 13l6-12 6 12M6 9h8" /><path d="M2 17h16M4 15l-2 2 2 2M16 15l2 2-2 2" strokeWidth="1.300" /></Ico></MetricIcon>
                <InputBox w={85} h={32} value="100%" label="水平缩放" />
                <MetricIcon><Ico s={22} vb={22} w={1.6}><path d="M1 15L6 3l5 12M3 11h6M1 19h12" /><path d="M14 3q5-2 5 1v4h-4q-2-2 1-3h3M14 12h6M17 19v-5M15 16l2-2 2 2" strokeWidth="1.300" /></Ico></MetricIcon>
                <InputBox w={85} h={32} value="0点" label="基线" />
                <MetricIcon><Ico s={20} w={1.8}><path d="M1 2v16M19 2v16M6 15l4-10 4 10M7 12h6" /></Ico></MetricIcon>
                <SelectBox w={85} h={32} value="0" label="间距" />
              </MetricGrid>
              <Fold $top={6}>
                <FoldLine $grow={134} />收起
                <FoldArrow width="10" height="11" viewBox="0 0 10 11" aria-hidden="true"><path d="M0 11h10L5 0z" fill="#a5a5a5" /></FoldArrow>
                <FoldLine $grow={112} />
              </Fold>

              <Heading $top={20}>文字选项</Heading>
              <IconRow $top={14} $gap={6}>
                <SquareButton aria-label="粗体"><Glyph $kind="bold">B</Glyph></SquareButton>
                <SquareButton aria-label="斜体"><Glyph $kind="italic">I</Glyph></SquareButton>
                <SquareButton aria-label="删除线"><Glyph $kind="strike">S</Glyph></SquareButton>
                <SquareButton aria-label="下划线"><Glyph $kind="under">U</Glyph></SquareButton>
                <SquareButton aria-label="大小写"><Ico s={20} w={1.8}><path d="M1 16L6 3l4 13M3 12h6" /><path d="M13 9q5-2 5 1v6h-4q-3-3 1-4h3" /></Ico></SquareButton>
                <SquareButton aria-label="上标"><Ico s={20} w={1.8}><path d="M1 17L6 5l5 12M3 13h6" /><path d="M13 3q4-2 4 1l-4 4h5" strokeWidth="1.500" /><path d="M15 13l2 4h-4z" fill="currentColor" stroke="none" /></Ico></SquareButton>
                <SquareButton aria-label="下标"><Ico s={20} w={1.8}><path d="M1 15L6 3l5 12M3 11h6" /><path d="M13 12q4-2 4 1l-4 4h5" strokeWidth="1.500" /><path d="M15 6l2-4h-4z" fill="currentColor" stroke="none" /></Ico></SquareButton>
              </IconRow>

              <Heading $top={21}>段落设置</Heading>
              <IconRow $top={14} $gap={9}>
                <SquareButton $active aria-label="左对齐"><AlignIcon rows={[[2, 18], [2, 12], [2, 18], [2, 12]]} /></SquareButton>
                <SquareButton aria-label="居中"><AlignIcon rows={[[2, 18], [5, 15], [2, 18], [5, 15]]} /></SquareButton>
                <SquareButton aria-label="右对齐"><AlignIcon rows={[[2, 18], [8, 18], [2, 18], [8, 18]]} /></SquareButton>
                <Rule $clear />
                <SquareButton $dim aria-label="末行左对齐"><AlignIcon rows={[[2, 18], [2, 18], [2, 18], [2, 11]]} /></SquareButton>
                <SquareButton $dim aria-label="末行居中"><AlignIcon rows={[[2, 18], [2, 18], [2, 18], [6, 14]]} /></SquareButton>
                <SquareButton $dim aria-label="末行右对齐"><AlignIcon rows={[[2, 18], [2, 18], [2, 18], [9, 18]]} /></SquareButton>
                <Rule $clear />
                <SquareButton $dim aria-label="两端对齐"><AlignIcon rows={[[2, 18], [2, 18], [2, 18], [2, 18]]} /></SquareButton>
              </IconRow>
              <Fold $top={6}>
                <FoldLine $grow={134} />展开
                <FoldArrow width="10" height="11" viewBox="0 0 10 11" aria-hidden="true"><path d="M0 0h10L5 11z" fill="#a5a5a5" /></FoldArrow>
                <FoldLine $grow={112} />
              </Fold>

              <AccordionList>
                <Accordion>
                  <Ico s={22} vb={20} w={1}><path d="M4 2h13v4h-4v8q-1 3-4 1V6H4zM1 17q5-5 9 0t8-1" /></Ico>
                  文字变形<Chevron s={14} w={2} />
                </Accordion>
                <Accordion>
                  <Ico s={22} vb={20} w={1}><path d="M1 3h14v4h-4v10H6V7H1zM14 11h4M14 14h4M14 17h4" /></Ico>
                  替换文字<Chevron s={14} w={2} />
                </Accordion>
                <Accordion><Fx $size={20}>fx</Fx>图层样式<Chevron s={14} w={2} /></Accordion>
              </AccordionList>
              <PropsThumb />
            </Props>
          </RightSide>
        </Body>
      </Shell>

      <Ime>
        <ImeLogo>
          <svg width="38" height="40" viewBox="0 0 38 40" aria-label="S"><path d="M3 5L28 1q3 0 4 3l5 28q0 3-3 4L9 40q-3 0-4-3L0 9q0-3 3-4z" fill="#f0562a" /><path d="M30 12C22 6 8 8 9 14s20 5 20 11-12 9-21 4" fill="none" stroke="#fff" strokeWidth="5" /></svg>
        </ImeLogo>
        <ImeButton>中</ImeButton>
        <ImeButton aria-label="标点"><Ico s={20} w={2}><circle cx="5" cy="7" r="2" /><circle cx="15" cy="13" r="2" fill="currentColor" /><path d="M17 13q0 4-3 5" /></Ico></ImeButton>
        <ImeButton aria-label="语音"><Ico s={22} vb={22} w={2}><rect x="8" y="1" width="6" height="12" rx="3" fill="currentColor" /><path d="M4 9q0 8 7 8t7-8M11 17v4" /></Ico></ImeButton>
        <ImeButton aria-label="键盘"><Ico s={20} w={2}><rect x="1" y="3" width="18" height="15" rx="2" /><path d="M4 7h12M4 10h12" strokeDasharray="1 2.500" /><path d="M6 14h8" /></Ico></ImeButton>
        <ImeButton aria-label="皮肤">
          <svg width="24" height="26" viewBox="0 0 24 26" aria-hidden="true"><defs><linearGradient id="sh" x1="0" y1="0" x2="0" y2="1"><stop stopColor="#ff6a7d" /><stop offset=".5" stopColor="#8a7dff" /><stop offset="1" stopColor="#5fa8ff" /></linearGradient></defs><path d="M6 7q5 4 10 0l6 4-2 5-3-1v9H6v-9l-3 1-2-5z" fill="url(#sh)" /><circle cx="20" cy="4" r="4" fill="#f5482c" /></svg>
        </ImeButton>
        <ImeButton aria-label="工具箱"><Ico s={18} w={2}><rect x="2" y="2" width="6" height="6" rx="1" fill="currentColor" /><rect x="12" y="2" width="6" height="6" rx="2" /><rect x="2" y="12" width="6" height="6" rx="1" fill="currentColor" /><rect x="12" y="12" width="6" height="6" rx="1" fill="currentColor" /></Ico></ImeButton>
        <ImeButton aria-label="表情">
          <svg width="24" height="24" viewBox="0 0 24 24" aria-hidden="true"><circle cx="12" cy="12" r="11.500" fill="#f4f2ee" /><path d="M2 9q7-3 16 1l-3 7q-6-5-10 1-3-3-3-9z" fill="#b5652b" /><circle cx="8" cy="12" r="1.500" fill="#1a1a1a" /><circle cx="14" cy="13" r="1.500" fill="#1a1a1a" /><path d="M20 4l3 5-3 3z" fill="#f4c84a" /></svg>
        </ImeButton>
      </Ime>
    </>
  );
}
